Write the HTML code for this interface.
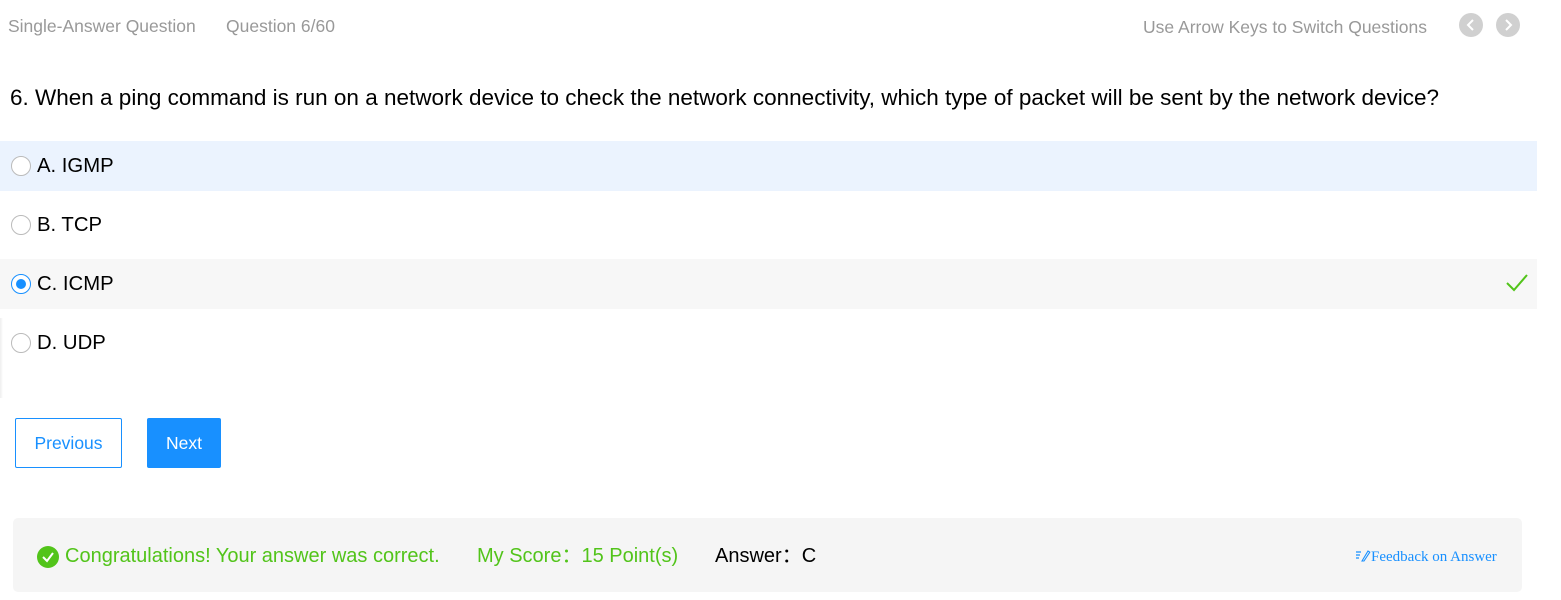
<!DOCTYPE html>
<html><head><meta charset="utf-8"><style>
*{margin:0;padding:0;box-sizing:border-box}
body{width:1561px;height:600px;background:#fff;font-family:"Liberation Sans",Arial,sans-serif;position:relative;overflow:hidden}
.a{position:absolute}
.hdr{color:#999;font-size:17.5px;top:16px}
.circ{width:24px;height:24px;border-radius:50%;background:#d0d0d0;top:13px}
.opt{position:absolute;left:0;width:1537px;height:50px;font-size:20.3px;color:#000}
.opt .r{position:absolute;left:11px;top:15px;width:20px;height:20px;border-radius:50%;border:1px solid #bbb;background:#fff}
.opt .t{position:absolute;left:37px;top:14px}
.res{position:absolute;top:26px;line-height:24px;height:24px;white-space:nowrap}
</style></head><body>
<div class="a hdr" style="left:8px">Single-Answer Question</div>
<div class="a hdr" style="left:226px">Question 6/60</div>
<div class="a hdr" style="left:1143px;top:17px">Use Arrow Keys to Switch Questions</div>
<div class="a circ" style="left:1459px"><svg width="24" height="24"><path d="M14 7 L9 12 L14 17" stroke="#fff" stroke-width="2" fill="none"/></svg></div>
<div class="a circ" style="left:1496px"><svg width="24" height="24"><path d="M10 7 L15 12 L10 17" stroke="#fff" stroke-width="2" fill="none"/></svg></div>
<div class="a" style="left:10px;top:85px;font-size:22.5px;color:#000;white-space:nowrap">6. When a ping command is run on a network device to check the network connectivity, which type of packet will be sent by the network device?</div>
<div class="opt" style="top:141px;background:#ebf3fe"><div class="r"></div><div class="t">A. IGMP</div></div>
<div class="opt" style="top:200px"><div class="r"></div><div class="t">B. TCP</div></div>
<div class="opt" style="top:259px;background:#f7f7f7"><div class="r" style="border-color:#1890ff"><div style="position:absolute;left:4px;top:4px;width:10px;height:10px;border-radius:50%;background:#1890ff"></div></div><div class="t">C. ICMP</div>
<svg class="a" style="left:1505px;top:13px" width="24" height="22"><path d="M2 11 L9 18 L22 3" stroke="#52c41a" stroke-width="2" fill="none"/></svg></div>
<div class="opt" style="top:318px"><div class="r"></div><div class="t">D. UDP</div></div>
<div class="a" style="left:0;top:318px;width:3px;height:80px;background:linear-gradient(to right,#eee,#fff)"></div>
<div class="a" style="left:15px;top:418px;width:107px;height:50px;border:1px solid #1890ff;color:#1890ff;font-size:17.5px;text-align:center;line-height:48px;border-radius:2px">Previous</div>
<div class="a" style="left:147px;top:418px;width:74px;height:50px;background:#1890ff;color:#fff;font-size:17.5px;text-align:center;line-height:50px;border-radius:2px">Next</div>
<div class="a" style="left:13px;top:518px;width:1509px;height:74px;background:#f5f5f5;border-radius:5px">
<svg class="a" style="left:24px;top:28px" width="22" height="22"><circle cx="11" cy="11" r="11" fill="#52c41a"/><path d="M6 11 L10 15 L16 7" stroke="#fff" stroke-width="2" fill="none"/></svg>
<div class="res" style="left:52px;font-size:20px;color:#52c41a">Congratulations! Your answer was correct.</div>
<div class="res" style="left:464px;font-size:20px;color:#52c41a">My Score：15 Point(s)</div>
<div class="res" style="left:702px;font-size:20px;color:#000">Answer：C</div>
<div class="a" style="left:1343px;top:31px;font-size:15px;color:#1890ff;font-family:'Liberation Serif',serif;white-space:nowrap">
<svg width="15" height="13" style="vertical-align:-1px"><path d="M0 3h5M0 6h4M0 9h3" stroke="#1890ff" stroke-width="1.2"/><path d="M6 12 L12 2 L13.8 3.2 L8 12 Z" stroke="#1890ff" fill="none" stroke-width="1.1"/></svg>Feedback on Answer</div>
</div>
</body></html>
